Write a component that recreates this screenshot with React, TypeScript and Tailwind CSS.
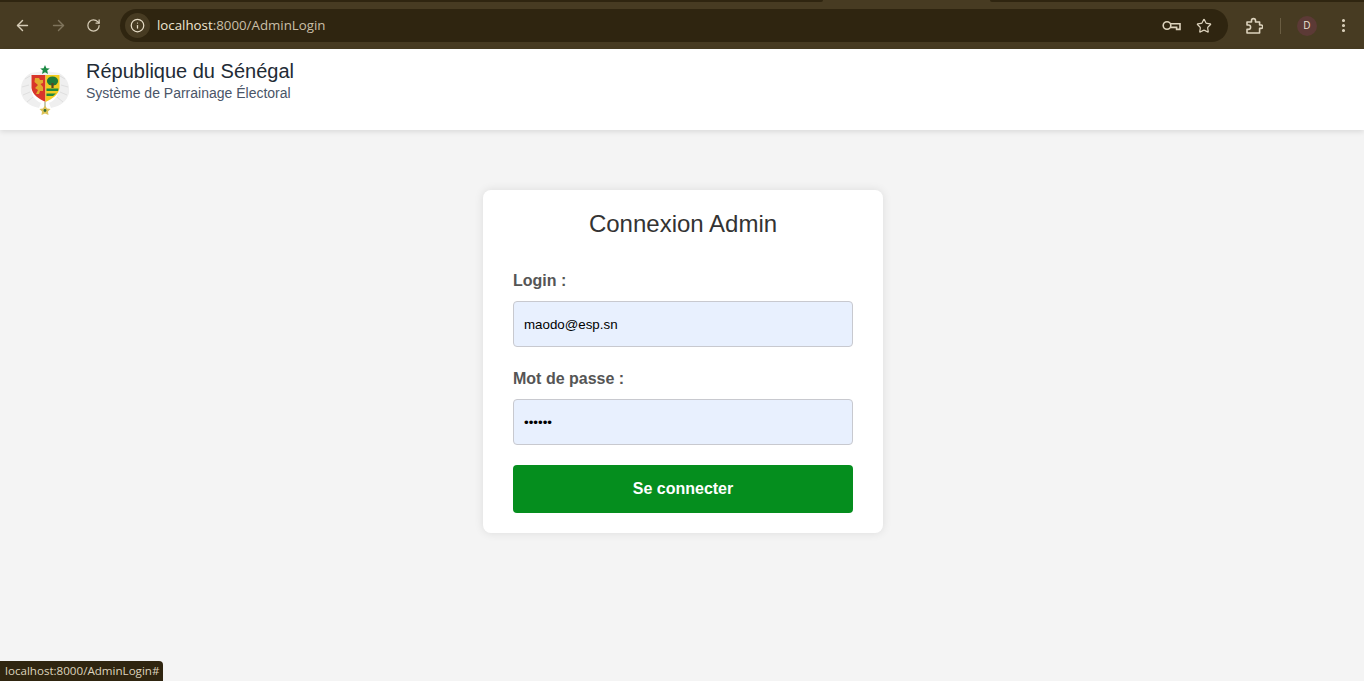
import { ArrowLeft, ArrowRight, RotateCw, Info, Star, EllipsisVertical } from "lucide-react";

const Emblem = () => (
  <svg width="50" height="52" viewBox="0 0 50 52" className="mt-[15px] shrink-0">
    {/* palm wreath */}
    <path d="M11 9 C3 13 0 21 1 29 C3 37 9 42 19 44 L21 39 C14 36 11 30 11 22 Z" fill="#efefef" />
    <path d="M39 9 C47 13 50 21 49 29 C47 37 41 42 31 44 L29 39 C36 36 39 30 39 22 Z" fill="#efefef" />
    <path d="M5 15 L10 12 M2 23 L9 21 M3 31 L10 28 M7 38 L13 33 M45 15 L40 12 M48 23 L41 21 M47 31 L40 28 M43 38 L37 33" stroke="#dcdcdc" strokeWidth="0.9" />
    <path d="M10 9 L25 7 L40 9 L40 12 L10 12 Z" fill="#f2f2f2" />
    {/* star */}
    <path d="M25 1 L26.4 4.2 L29.8 4.4 L27.2 6.6 L28 10 L25 8.2 L22 10 L22.8 6.6 L20.2 4.4 L23.6 4.2 Z" fill="#1c8a45" />
    {/* shield */}
    <path d="M11.5 11 H25.5 V38 C19 35 12.5 31 11.5 24 Z" fill="#d8362a" />
    <path d="M25.5 11 H39.5 V24 C38.5 31 32 35 25.5 38 Z" fill="#f3cd1f" />
    {/* lion */}
    <path d="M15 14 H19 L20 16 H23 V19 L20.5 20 L23 23 V27 H20 L19 30 H16 L18 26 L15 24 L18 21 L14.5 18 Z" fill="#e3a92e" />
    {/* baobab */}
    <ellipse cx="32.5" cy="17" rx="5.6" ry="4.6" fill="#1f7a3a" />
    <rect x="31.4" y="19" width="2.2" height="5" fill="#5a4322" />
    <path d="M26.5 24.5 H38.5 L38 27 H26.5 Z" fill="#1f8a40" />
    <path d="M26.5 29.5 H36 L33 32 H26.5 Z" fill="#1f8a40" />
    {/* medal */}
    <path d="M25 38 V43" stroke="#8d9a66" strokeWidth="1" />
    <path d="M25 41.5 L27 44.5 L30.5 45 L28 47.5 L28.5 51 L25 49.5 L21.5 51 L22 47.5 L19.5 45 L23 44.5 Z" fill="#dcc257" />
    <circle cx="25" cy="46.5" r="1.4" fill="#2f6b34" />
  </svg>
);

const KeyIcon = () => (
  <svg width="19" height="12" viewBox="0 0 19 12" fill="none" stroke="#ddd3bd" strokeWidth="1.6">
    <circle cx="5" cy="5.5" r="3.8" />
    <path d="M8.8 3.8 H18 V9.4 H14.6 V7.4 H8.8" />
  </svg>
);

// chrome's extensions button, not the lucide puzzle
const ExtensionsIcon = () => (
  <svg width="18" height="18" viewBox="0 0 18 18" fill="none" stroke="#ddd3bd" strokeWidth="1.6" strokeLinejoin="round">
    <path d="M2 5 H6.5 V3.6 A2 2 0 0 1 10.5 3.6 V5 H14.6 V8 H16 A1.6 1.6 0 0 1 16 11.4 H14.6 V16 H2 V12.4 H3.4 A2.2 2.2 0 0 0 3.4 8 H2 Z" />
  </svg>
);

const Field = ({ label, type, value }: { label: string; type: string; value: string }) => (
  <div>
    <label className="mb-[11px] block h-[18px] text-[16px] leading-[18px] font-bold text-[#555]">{label}</label>
    <input
      type={type}
      value={value}
      readOnly
      className="block h-[46px] w-full rounded-[4px] border border-[#c8c9cf] bg-[#e8f0fe] px-[10px] font-['Liberation_Sans',sans-serif] text-[13.33px] text-black outline-none"
    />
  </div>
);

export default function App() {
  return (
    <div className="relative flex h-[681px] flex-col overflow-hidden bg-[#f4f4f4] font-['Liberation_Sans',Arial,sans-serif]">
      {/* browser chrome */}
      <div className="h-[49px] shrink-0 bg-[#473b22]">
        <div className="flex h-[2px]">
          <div className="w-[823px] rounded-br-[3px] bg-[#2f2510]" />
          <div className="w-[167px]" />
          <div className="flex-1 rounded-bl-[3px] bg-[#2f2510]" />
        </div>
        <div className="flex h-[47px] items-start pt-[7px]">
          <div className="flex h-[33px] w-[120px] items-center pl-[14px]">
            <ArrowLeft size={17} strokeWidth={2} className="text-[#d6ccb6]" />
            <ArrowRight size={17} strokeWidth={2} className="ml-[19px] text-[#7f745c]" />
            <RotateCw size={15} strokeWidth={2} className="ml-[19px] text-[#d6ccb6]" />
          </div>
          <div className="flex h-[33px] w-[1108px] items-center rounded-full bg-[#2f2510] pl-[5px] pr-[16px]">
            <div className="flex h-[25px] w-[25px] items-center justify-center rounded-full bg-[#473b22]">
              <Info size={15} strokeWidth={2} className="text-[#e6dcc6]" />
            </div>
            <span className="ml-[7px] font-['Open_Sans',sans-serif] text-[13.3px] text-[#c9bfa8]">
              <span className="text-[#eee5d2]">localhost</span>:8000/AdminLogin
            </span>
            <div className="ml-auto flex items-center gap-[15px]">
              <KeyIcon />
              <Star size={16} strokeWidth={1.8} className="text-[#ddd3bd]" />
            </div>
          </div>
          <div className="flex h-[33px] flex-1 items-center pl-[17px]">
            <ExtensionsIcon />
            <div className="ml-[17px] h-[16px] w-px bg-[#6a5d42]" />
            <div className="ml-[16px] flex h-[20px] w-[20px] items-center justify-center rounded-full bg-[#5c3a36] font-['Open_Sans',sans-serif] text-[10px] text-[#eee5d2]">
              D
            </div>
            <EllipsisVertical size={17} strokeWidth={2.4} className="ml-[18px] text-[#ddd3bd]" />
          </div>
        </div>
      </div>

      {/* site header */}
      <header className="z-10 flex h-[81px] shrink-0 items-start bg-white pl-[20px] shadow-[0_2px_5px_rgba(0,0,0,0.1)]">
        <Emblem />
        <div className="ml-[16px] mt-[10px]">
          <div className="text-[20px] leading-[24px] text-[#222b35]">République du Sénégal</div>
          <div className="mt-[1px] text-[14px] leading-[18px] text-[#4a5568]">Système de Parrainage Électoral</div>
        </div>
      </header>

      {/* login card */}
      <main className="flex flex-1 justify-center pl-[2px] pt-[60px]">
        <div className="h-[343px] w-[400px] rounded-[8px] bg-white px-[30px] pt-[20px] shadow-[0_0_10px_rgba(0,0,0,0.1)]">
          <h2 className="mb-[34px] h-[28px] text-center text-[24px] leading-[28px] text-[#333]">Connexion Admin</h2>
          <div className="mb-[20px] flex flex-col gap-[23px]">
            <Field label="Login :" type="text" value="maodo@esp.sn" />
            <Field label="Mot de passe :" type="password" value="secret" />
          </div>
          <button className="h-[48px] w-full rounded-[4px] bg-[#058e1e] text-[16px] font-bold text-white">Se connecter</button>
        </div>
      </main>

      {/* link status bubble */}
      <div className="absolute bottom-0 left-0 flex h-[20px] w-[163px] items-center rounded-tr-[4px] bg-[#2f2510] pl-[5px] font-['Open_Sans',sans-serif] text-[11.6px] text-[#ddd3bd]">
        localhost:8000/AdminLogin#
      </div>
    </div>
  );
}
